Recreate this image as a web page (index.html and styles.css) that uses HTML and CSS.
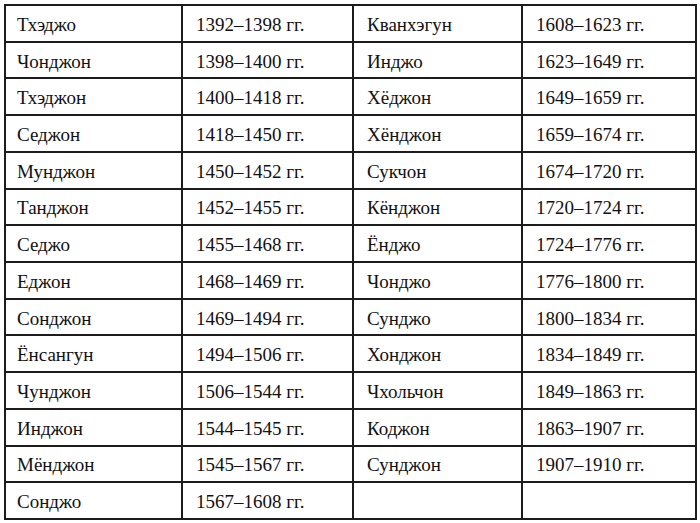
FILE: index.html
```html
<!DOCTYPE html>
<html lang="ru">
<head>
<meta charset="utf-8">
<link rel="stylesheet" href="styles.css">
</head>
<body>
<div class="grid">
<div class="c">Тхэджо</div><div class="c">1392–1398 гг.</div><div class="c">Кванхэгун</div><div class="c">1608–1623 гг.</div>
<div class="c">Чонджон</div><div class="c">1398–1400 гг.</div><div class="c">Инджо</div><div class="c">1623–1649 гг.</div>
<div class="c">Тхэджон</div><div class="c">1400–1418 гг.</div><div class="c">Хёджон</div><div class="c">1649–1659 гг.</div>
<div class="c">Седжон</div><div class="c">1418–1450 гг.</div><div class="c">Хёнджон</div><div class="c">1659–1674 гг.</div>
<div class="c">Мунджон</div><div class="c">1450–1452 гг.</div><div class="c">Сукчон</div><div class="c">1674–1720 гг.</div>
<div class="c">Танджон</div><div class="c">1452–1455 гг.</div><div class="c">Кёнджон</div><div class="c">1720–1724 гг.</div>
<div class="c">Седжо</div><div class="c">1455–1468 гг.</div><div class="c">Ёнджо</div><div class="c">1724–1776 гг.</div>
<div class="c">Еджон</div><div class="c">1468–1469 гг.</div><div class="c">Чонджо</div><div class="c">1776–1800 гг.</div>
<div class="c">Сонджон</div><div class="c">1469–1494 гг.</div><div class="c">Сунджо</div><div class="c">1800–1834 гг.</div>
<div class="c">Ёнсангун</div><div class="c">1494–1506 гг.</div><div class="c">Хонджон</div><div class="c">1834–1849 гг.</div>
<div class="c">Чунджон</div><div class="c">1506–1544 гг.</div><div class="c">Чхольчон</div><div class="c">1849–1863 гг.</div>
<div class="c">Инджон</div><div class="c">1544–1545 гг.</div><div class="c">Коджон</div><div class="c">1863–1907 гг.</div>
<div class="c">Мёнджон</div><div class="c">1545–1567 гг.</div><div class="c">Сунджон</div><div class="c">1907–1910 гг.</div>
<div class="c">Сонджо</div><div class="c">1567–1608 гг.</div><div class="c"></div><div class="c"></div>
</div>
</body>
</html>
```
FILE: styles.css
```css
html, body {
  margin: 0;
  padding: 0;
  background: #fff;
}
body {
  padding: 4px 0 0 4px;
  font-family: "Liberation Serif", "Times New Roman", serif;
  font-size: 19px;
  color: #111;
}
.grid {
  display: grid;
  grid-template-columns: 175px 169px 167px 172px;
  grid-template-rows: repeat(14, 1fr);
  gap: 2px;
  padding: 2px;
  width: 689px;
  height: 512px;
  background: #1c1c1c;
  box-sizing: content-box;
}
.c {
  background: #fff;
  display: flex;
  align-items: center;
  padding: 3px 0 0 11px;
  white-space: nowrap;
}
.c:nth-child(4n+2), .c:nth-child(4n+3), .c:nth-child(4n) {
  padding-left: 13px;
}
```
